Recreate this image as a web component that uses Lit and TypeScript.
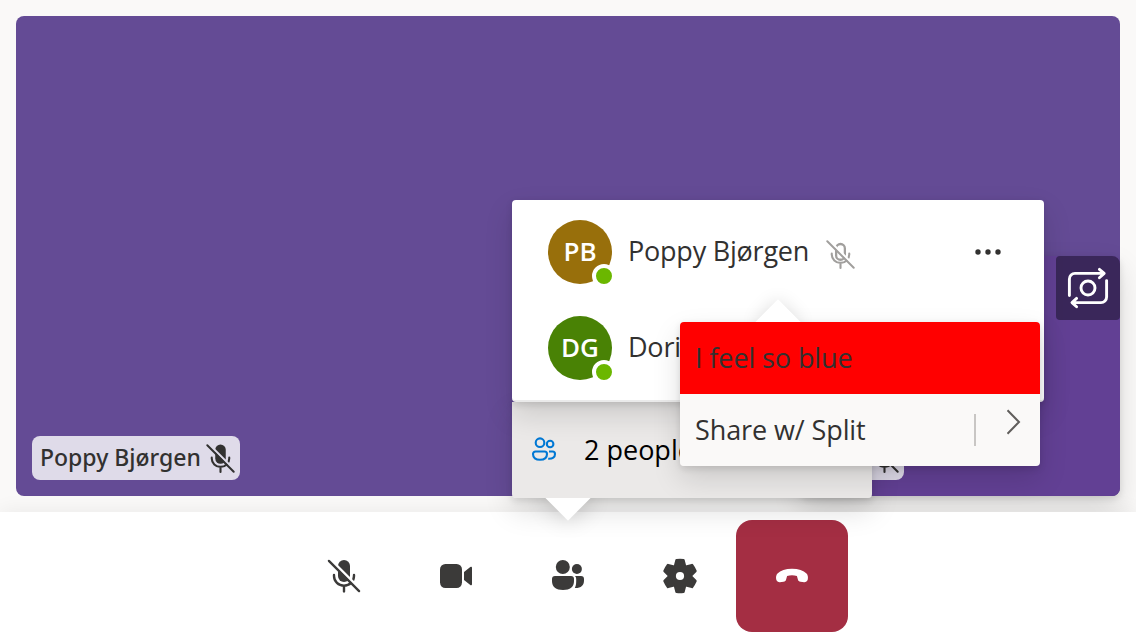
import { LitElement, html, css, svg } from "lit";
import { customElement, property } from "lit/decorators.js";

@customElement("mic-off-icon")
class MicOffIcon extends LitElement {
  @property({ type: Boolean }) outline = false;
  static styles = css`
    :host { display: block; flex: none; }
    svg { display: block; width: 100%; height: 100%; }
  `;
  render() {
    return html`<svg viewBox="0 0 40 40" fill="none" stroke="currentColor">
      <mask id="gap" maskUnits="userSpaceOnUse" x="0" y="0" width="40" height="40">
        <rect width="40" height="40" fill="#fff" stroke="none"></rect>
        <path d="M4 1L39 36" stroke="#000" stroke-width="2.6"></path>
      </mask>
      <g mask="url(#gap)">
        ${this.outline
          ? svg`<rect x="15" y="8" width="10" height="18" rx="5" stroke-width="2.6"></rect>`
          : svg`<rect x="14" y="4" width="12" height="22" rx="6" fill="currentColor" stroke="none"></rect>`}
        <path d="M10 19v1a10 9.6 0 0 0 20 0v-1M20 30v5.4" stroke-width="2.4" stroke-linecap="round"></path>
      </g>
      <path d="M4.9 4.9L35.1 35.1" stroke-width="2.3" stroke-linecap="round"></path>
    </svg>`;
  }
}

@customElement("app-root")
class AppRoot extends LitElement {
  static styles = css`
    :host {
      display: block; position: relative; width: 1136px; height: 640px; overflow: hidden;
      background: #faf9f8; color: #323130; font-family: "Open Sans", "Noto Sans", sans-serif;
    }
    * { box-sizing: border-box; }
    svg { display: block; flex: none; }
    .screen { display: flex; flex-direction: column; height: 100%; }
    .stage { height: 512px; padding: 16px; flex: none; }
    .remote {
      position: relative; height: 480px; border-radius: 8px; background: #644b95;
      display: flex; align-items: flex-end; padding: 16px;
    }
    .tag {
      display: flex; align-items: center; height: 44px; border-radius: 8px; padding-left: 8px;
      background: #dfdbe9; font: 500 23px "Noto Sans", sans-serif; white-space: nowrap;
    }
    .tag span { line-height: 43px; height: 44px; }
    .tag mic-off-icon { width: 35px; height: 35px; margin-left: auto; margin-right: 2.5px; }
    .first { width: 208px; }
    .local {
      position: absolute; right: 0; bottom: 0; width: 320px; height: 240px; border-radius: 8px;
      background: #624094; padding: 16px; display: flex; align-items: flex-end;
      box-shadow: 0 12.8px 28.8px rgba(0,0,0,.132), 0 2.4px 7.2px rgba(0,0,0,.108);
    }
    .second { width: 88px; }
    .flip {
      position: absolute; right: 0; top: 0; width: 64px; height: 64px;
      background: #3a275a; border-radius: 4px 8px 4px 4px;
    }
    .bar {
      position: relative; height: 128px; background: #fff; display: flex; justify-content: center;
      align-items: center; box-shadow: 0 0 20px rgba(0,0,0,.07); flex: none;
    }
    .btn { width: 112px; height: 112px; display: grid; place-items: center; color: #3b3a39; }
    .btn mic-off-icon { width: 40px; height: 40px; }
    .end { background: #a42e43; color: #fff; border-radius: 16px; }
    .pop {
      position: absolute; border-radius: 4px;
      box-shadow: 0 12.8px 28.8px rgba(0,0,0,.132), 0 2.4px 7.2px rgba(0,0,0,.108);
    }
    .people { left: 512px; top: 402px; width: 360px; height: 96px; }
    .people-row {
      position: relative; height: 96px; background: #ebe9e8; color: #000; display: flex;
      align-items: center; padding-left: 16px; border-radius: 0 0 4px 4px; font-size: 27px;
    }
    .people-row span { margin-left: 24px; margin-bottom: 2px; white-space: nowrap; }
    .beak {
      position: absolute; width: 32px; height: 32px; background: #fff; transform: rotate(45deg);
      box-shadow: 0 0 24px rgba(0,0,0,.2);
    }
    .down { left: 40px; bottom: -16px; }
    .up { left: 82px; top: -16px; box-shadow: 0 0 18px rgba(0,0,0,.13); }
    .roster {
      left: 512px; top: 200px; width: 532px; height: 202px; background: #fff;
      border-bottom: 2px solid #eaeaea; padding: 4px 36px;
    }
    .roster-row { height: 96px; display: flex; align-items: center; font-size: 27px; white-space: nowrap; }
    .roster-row .name { width: 181px; margin-left: 16px; margin-bottom: 4px; letter-spacing: -0.22px; }
    .roster-row mic-off-icon { width: 35px; height: 35px; color: #a19f9d; margin-left: 14px; margin-top: 4px; }
    .dots { margin-left: auto; margin-right: 6px; }
    .avatar {
      position: relative; width: 64px; height: 64px; border-radius: 50%; color: #fff; flex: none;
      display: grid; place-items: center; font-size: 26px; font-weight: 600;
      padding-bottom: 2px;
    }
    .gold { background: #986f0b; }
    .green { background: #498205; }
    .presence {
      position: absolute; left: 44px; top: 44px; width: 24px; height: 24px; border-radius: 50%;
      background: #6bb700; border: 4px solid #fff;
    }
    .menu { left: 680px; top: 322px; width: 360px; height: 144px; }
    .items { position: relative; border-radius: 4px; overflow: hidden; font-size: 27px; letter-spacing: -0.1px; }
    .item { height: 72px; padding-left: 15px; display: flex; align-items: center; background: #faf9f8; white-space: nowrap; }
    .item span { margin-bottom: 1px; }
    .item.red { background: #f00; }
    .split { width: 2px; height: 32px; background: #c8c6c4; margin-left: auto; }
    .chev { margin: 0 19px 16px 30px; }
  `;

  render() {
    return html`
      <div class="screen">
        <div class="stage">
          <div class="remote">
            <div class="tag first"><span>Poppy Bjørgen</span><mic-off-icon></mic-off-icon></div>
            <div class="local">
              <div class="tag second"><mic-off-icon></mic-off-icon></div>
              <div class="flip">
                <svg width="64" height="64" viewBox="0 0 64 64" fill="none" stroke="#fff" stroke-width="2.9" stroke-linecap="round" stroke-linejoin="round">
                  <path d="M13.4 39.6V23a5.6 5.6 0 0 1 5.6-5.6h29M43.4 13.4l4.8 4-4.8 4.4"></path>
                  <path d="M50.6 24.6V41a5.6 5.6 0 0 1-5.6 5.6H16.4M20.6 42.4l-4.6 4.2 4.6 4.2"></path>
                  <circle cx="32" cy="32" r="7"></circle>
                </svg>
              </div>
            </div>
          </div>
        </div>
        <div class="bar">
          <div class="btn"><mic-off-icon></mic-off-icon></div>
          <div class="btn">
            <svg width="40" height="40" viewBox="0 0 40 40" fill="currentColor">
              <rect x="4" y="8" width="22" height="24" rx="5.4"></rect>
              <path d="M28 16l6.3-5a1 1 0 0 1 1.7.8v16.4a1 1 0 0 1-1.7.8L28 24z"></path>
            </svg>
          </div>
          <div class="btn">
            <svg width="40" height="40" viewBox="0 0 40 40" fill="currentColor">
              <circle cx="14.8" cy="11" r="7"></circle>
              <circle cx="28.9" cy="13" r="5"></circle>
              <path d="M7 20h16a3 3 0 0 1 3 3v2c0 6-4 9-11 9S4 31 4 25v-2a3 3 0 0 1 3-3z"></path>
              <path d="M27 20h6a3 3 0 0 1 3 3v1.500c0 5-3 7.700-9.200 7.500 1-1.800 1.400-3.800 1.400-7V23c0-1.200-.4-2.200-1.200-3z"></path>
            </svg>
          </div>
          <div class="btn">
            <svg width="40" height="40" viewBox="-20 -20 40 40" fill="currentColor">
              <mask id="hole" maskUnits="userSpaceOnUse" x="-20" y="-20" width="40" height="40">
                <rect x="-20" y="-20" width="40" height="40" fill="#fff"></rect>
                <circle r="4.1" fill="#000"></circle>
              </mask>
              <g mask="url(#hole)">
                <circle r="11.8"></circle>
                ${[0, 60, 120, 180, 240, 300].map(
                  (a) => svg`<path transform=${`rotate(${a})`} d="M-6.500-9L-4.700-16.100Q-4.500-17-3.600-17.100Q0-17.500 3.600-17.100Q4.500-17 4.700-16.100L6.500-9z"></path>`
                )}
              </g>
            </svg>
          </div>
          <div class="btn end">
            <svg width="40" height="40" viewBox="0 0 40 40" fill="currentColor">
              <path d="M20 12.700c6.500 0 11.500 1.700 14.500 4.700 1.500 1.600 1.800 4 1.200 6.300-.5 1.700-1.900 2.600-3.600 2.500l-3.600-.4c-1.500-.2-2.300-1.100-2.600-2.400l-1-3.400c-3.200-1-6.600-1-9.800 0l-1 3.400c-.3 1.300-1.100 2.200-2.600 2.400l-3.600.4c-1.700.1-3.100-.8-3.600-2.500-.6-2.300-.3-4.700 1.200-6.300 3-3 8-4.700 14.500-4.700z"></path>
            </svg>
          </div>
        </div>
      </div>

      <div class="pop people">
        <div class="beak down"></div>
        <div class="people-row">
          <svg width="32" height="32" viewBox="0 0 32 32" fill="none" stroke="#0078d4" stroke-width="2.1">
            <circle cx="12" cy="8.7" r="4.3"></circle>
            <circle cx="22.1" cy="10" r="3.3"></circle>
            <path d="M7.500 17.500h9a2.500 2.500 0 0 1 2.500 2.500c0 3.800-2.700 5.800-7 5.800s-7-2-7-5.800A2.500 2.500 0 0 1 7.500 17.500zM21 17.500h3.500a2.500 2.500 0 0 1 2.500 2.500c0 3.300-2.300 5-6.800 4.800"></path>
          </svg>
          <span>2 people</span>
        </div>
      </div>

      <div class="pop roster">
        <div class="roster-row">
          <div class="avatar gold">PB<i class="presence"></i></div>
          <span class="name">Poppy Bjørgen</span>
          <mic-off-icon outline></mic-off-icon>
          <svg class="dots" width="28" height="8" viewBox="0 0 28 8" fill="#323130">
            <circle cx="4" cy="4" r="2.7"></circle><circle cx="14" cy="4" r="2.7"></circle><circle cx="24" cy="4" r="2.7"></circle>
          </svg>
        </div>
        <div class="roster-row">
          <div class="avatar green">DG<i class="presence"></i></div>
          <span class="name">Doris</span>
        </div>
      </div>

      <div class="pop menu">
        <div class="beak up"></div>
        <div class="items">
          <div class="item red"><span>I feel so blue</span></div>
          <div class="item">
            <span>Share w/ Split</span>
            <div class="split"></div>
            <svg class="chev" width="15" height="26" viewBox="0 0 15 26" fill="none" stroke="#605e5c" stroke-width="2">
              <path d="M1.500 1.300L13 13 1.500 24.700"></path>
            </svg>
          </div>
        </div>
      </div>
    `;
  }
}
